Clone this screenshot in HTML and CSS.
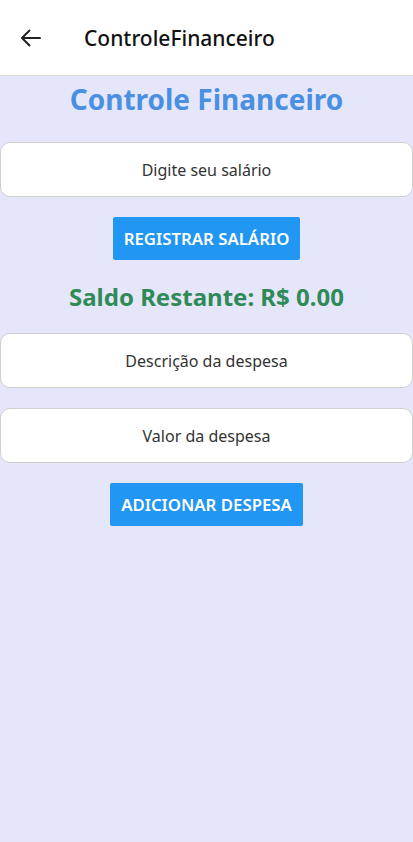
FILE: index.html
```html
<!DOCTYPE html>
<html lang="pt">
<head>
<meta charset="utf-8">
<link rel="stylesheet" href="styles.css">
</head>
<body>
<header class="appbar">
  <span class="back">
    <svg width="24" height="24" viewBox="0 0 24 24"><path d="M21 12H3.5M10.5 4.5 3 12l7.5 7.5" fill="none" stroke="#222" stroke-width="2" stroke-linecap="round" stroke-linejoin="round"/></svg>
  </span>
  <span class="appbar-title">ControleFinanceiro</span>
</header>
<main class="content">
  <h1 class="title">Controle Financeiro</h1>
  <div class="field">Digite seu salário</div>
  <button class="btn btn-salary">REGISTRAR SALÁRIO</button>
  <h2 class="saldo">Saldo Restante: R$ 0.00</h2>
  <div class="field field-after-saldo">Descrição da despesa</div>
  <div class="field field-gap">Valor da despesa</div>
  <button class="btn btn-expense">ADICIONAR DESPESA</button>
</main>
</body>
</html>
```
FILE: styles.css
```css
html, body {
  margin: 0;
  padding: 0;
  height: 100%;
}
body {
  font-family: "Noto Sans", "Open Sans", sans-serif;
  background: #e6e6fa;
  display: flex;
  flex-direction: column;
}
.appbar {
  height: 75px;
  background: #fff;
  border-bottom: 1px solid #d8d8d8;
  display: flex;
  align-items: center;
  padding-left: 19px;
  flex-shrink: 0;
}
.back {
  display: flex;
  width: 24px;
  height: 24px;
}
.appbar-title {
  margin-left: 41px;
  font-size: 21px;
  font-weight: 500;
  color: #111;
}
.content {
  display: flex;
  flex-direction: column;
  align-items: center;
}
.title {
  margin: 5px 0 0;
  font-size: 28px;
  line-height: 36px;
  font-weight: 700;
  color: #4a90e2;
}
.field {
  box-sizing: border-box;
  width: 100%;
  height: 55px;
  margin-top: 25px;
  background: #fff;
  border: 1px solid #cfcfcf;
  border-radius: 10px;
  display: flex;
  align-items: center;
  justify-content: center;
  font-size: 16px;
  color: #333;
}
.field-after-saldo {
  margin-top: 20px;
}
.field-gap {
  margin-top: 20px;
}
.btn {
  border: none;
  background: #2196f3;
  color: #fff;
  font-family: inherit;
  font-size: 16.8px;
  font-weight: 600;
  height: 43px;
  padding: 0 11px;
  border-radius: 2px;
  margin-top: 20px;
}
.saldo {
  margin: 21px 0 0;
  font-size: 24px;
  line-height: 32px;
  font-weight: 700;
  color: #2e8b57;
}
.btn-expense {
  margin-top: 20px;
}
```
